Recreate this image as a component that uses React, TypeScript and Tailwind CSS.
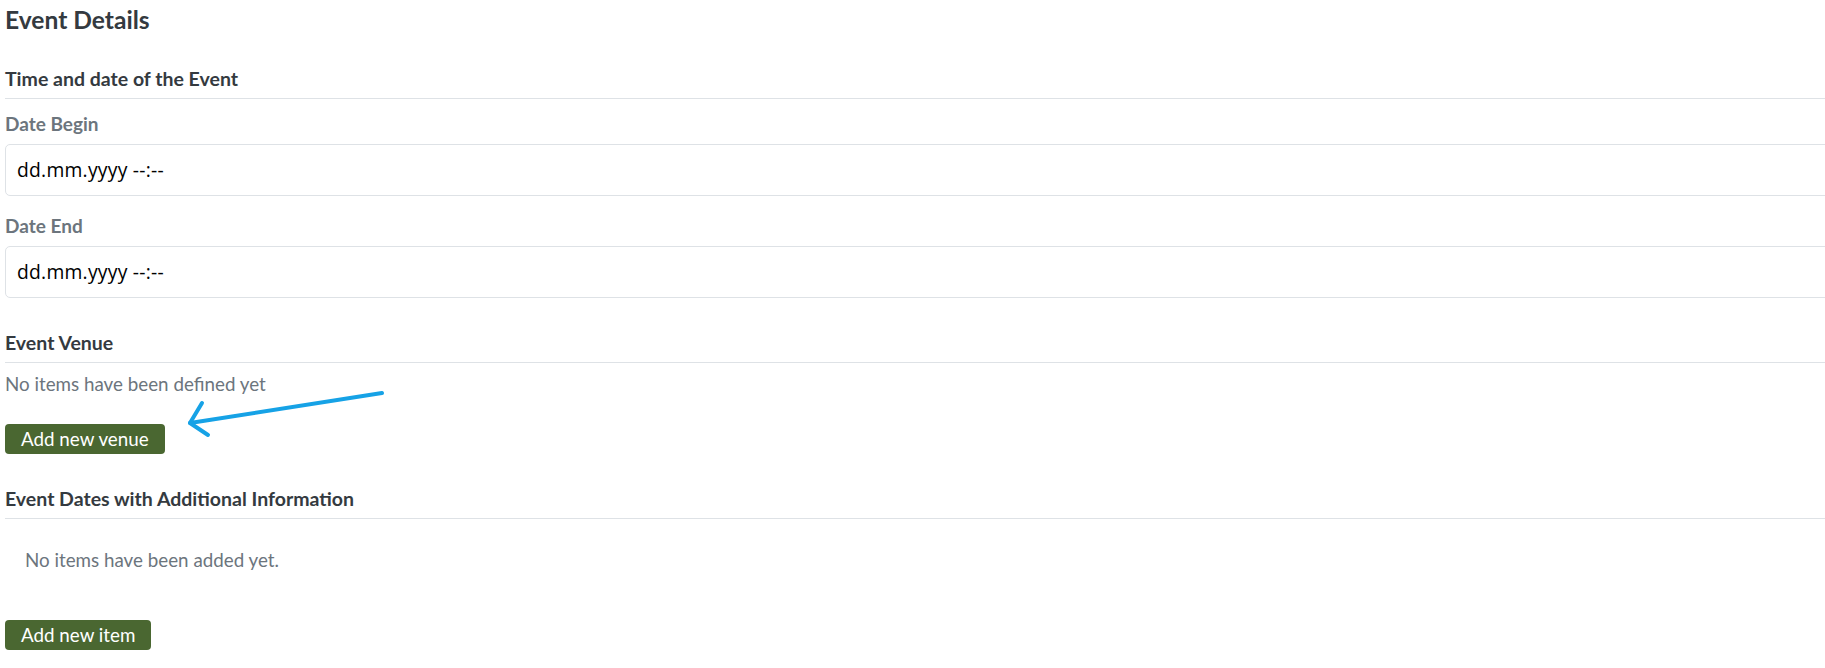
import React from "react";

const font = { fontFamily: "Lato, 'Liberation Sans', sans-serif" };

function SectionTitle({ children, className = "" }: { children: React.ReactNode; className?: string }) {
  return (
    <h3 className={`h-[39px] leading-[38px] border-b border-[#dee2e6] text-[19.5px] font-bold text-[#343a40] ${className}`}>
      {children}
    </h3>
  );
}

function DateField({ label, className = "" }: { label: string; className?: string }) {
  return (
    <div className={className}>
      <label className="block leading-[24px] text-[19px] font-bold text-[#6c757d]">{label}</label>
      <div className="mt-[8px] h-[52px] rounded-[5px] border border-[#dee2e6] bg-white flex items-center pl-[11px]">
        <span
          className="text-[19.3px] tracking-[0.25px] text-black"
          style={{ fontFamily: "'Open Sans', 'Noto Sans', sans-serif" }}
        >
          dd.mm.yyyy --:--
        </span>
      </div>
    </div>
  );
}

export default function App() {
  return (
    <div className="relative w-full h-[668px] overflow-hidden bg-white" style={font}>
      <div className="w-[1900px] pl-[5px]">
        {/* Header */}
        <h2 className="h-[40px] leading-[40px] text-[24.6px] font-bold text-[#343a40]">Event Details</h2>

        {/* Time and date */}
        <SectionTitle className="mt-[20px]">Time and date of the Event</SectionTitle>
        <DateField label="Date Begin" className="mt-[13px]" />
        <DateField label="Date End" className="mt-[18px]" />

        {/* Venue */}
        <SectionTitle className="mt-[26px]">Event Venue</SectionTitle>
        <p className="mt-[9px] leading-[24px] text-[18.8px] text-[#6c757d]">No items have been defined yet</p>
        <button className="mt-[28px] h-[30px] px-[16px] rounded-[4px] bg-[#4a6731] text-white text-[18.8px] leading-[30px]">
          Add new venue
        </button>

        {/* Dates with info */}
        <SectionTitle className="mt-[26px]">Event Dates with Additional Information</SectionTitle>
        <p className="mt-[29px] pl-[20px] leading-[24px] text-[18.8px] text-[#6c757d]">No items have been added yet.</p>
        <button className="block mt-[48px] h-[30px] px-[16px] rounded-[4px] bg-[#4a6731] text-white text-[18.8px] leading-[30px]">
          Add new item
        </button>
      </div>

      {/* annotation arrow */}
      <svg className="absolute left-0 top-0 pointer-events-none" width="400" height="450" viewBox="0 0 400 450">
        <g stroke="#16a2e6" strokeWidth="4" strokeLinecap="round" strokeLinejoin="round" fill="none">
          <path d="M382 393 L190 423" />
          <path d="M202 403 L190 423 L208 435" />
        </g>
      </svg>
    </div>
  );
}
